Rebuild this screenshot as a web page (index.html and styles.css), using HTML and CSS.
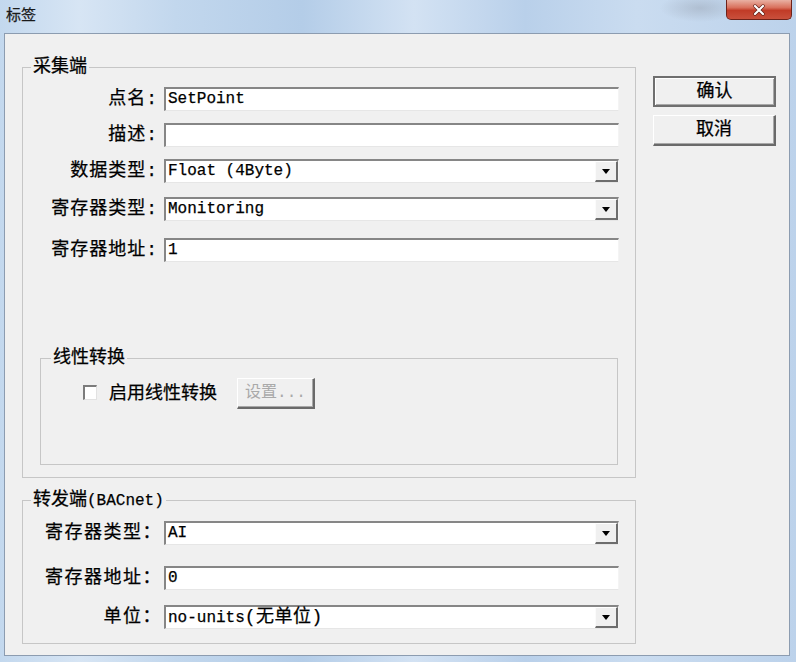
FILE: index.html
```html
<!DOCTYPE html>
<html lang="zh-CN">
<head>
<meta charset="utf-8">
<title>标签</title>
<link rel="stylesheet" href="styles.css">
</head>
<body>
<div class="window">
  <div class="titlebar">
    <span class="title">标签</span>
    <div class="close">
      <svg width="14" height="12" viewBox="0 0 14 12"><path d="M3 2 L11 10 M11 2 L3 10" stroke="#5a1a12" stroke-width="3.4" stroke-linecap="round"/><path d="M3 2 L11 10 M11 2 L3 10" stroke="#ffffff" stroke-width="2.2" stroke-linecap="round"/></svg>
    </div>
  </div>
  <div class="client">
    <div class="groups">
      <fieldset class="group group-src">
        <legend class="legend">采集端</legend>
        <div class="row">
          <span class="label">点名:</span>
          <div class="field"><span class="val">SetPoint</span></div>
        </div>
        <div class="row">
          <span class="label">描述:</span>
          <div class="field"><span class="val"></span></div>
        </div>
        <div class="row">
          <span class="label">数据类型:</span>
          <div class="field"><span class="val">Float (4Byte)</span><span class="drop"><i class="tri"></i></span></div>
        </div>
        <div class="row gap-14">
          <span class="label">寄存器类型:</span>
          <div class="field"><span class="val">Monitoring</span><span class="drop"><i class="tri"></i></span></div>
        </div>
        <div class="row gap-17">
          <span class="label">寄存器地址:</span>
          <div class="field"><span class="val">1</span></div>
        </div>
        <fieldset class="group group-linear">
          <legend class="legend legend-linear">线性转换</legend>
          <div class="linear-row">
            <span class="check"></span>
            <span class="check-label">启用线性转换</span>
            <button class="btn btn-disabled">设置...</button>
          </div>
        </fieldset>
      </fieldset>
      <fieldset class="group group-dst">
        <legend class="legend"><span>转发端</span><span class="latin">(BACnet)</span></legend>
        <div class="row">
          <span class="label label-wide">寄存器类型：</span>
          <div class="field"><span class="val">AI</span><span class="drop"><i class="tri"></i></span></div>
        </div>
        <div class="row gap-21">
          <span class="label label-wide">寄存器地址：</span>
          <div class="field"><span class="val">0</span></div>
        </div>
        <div class="row">
          <span class="label label-wide">单位：</span>
          <div class="field"><span class="val">no-units<span class="cjk">(无单位)</span></span><span class="drop"><i class="tri"></i></span></div>
        </div>
      </fieldset>
    </div>
    <div class="actions">
      <button class="btn btn-default">确认</button>
      <button class="btn">取消</button>
    </div>
  </div>
</div>
</body>
</html>
```
FILE: styles.css
```css
html, body {
  margin: 0;
  padding: 0;
}

body {
  width: 796px;
  height: 662px;
  overflow: hidden;
  font-family: "Liberation Mono", "Noto Sans CJK SC", monospace;
  color: #000;
}

.window {
  width: 796px;
  height: 662px;
  display: flex;
  flex-direction: column;
  box-sizing: border-box;
  -webkit-text-stroke: 0.25px currentColor;
  background:
    radial-gradient(ellipse 40px 14px at 700px 8px, rgba(150,160,175,0.45), rgba(150,160,175,0) 100%),
    linear-gradient(90deg, #c3d8ee 0%, #d7e5f4 10%, #c2d7ed 22%, #b4cde8 38%, #d3e2f3 52%, #b9d0ea 66%, #cadcf0 80%, #bcd2eb 100%);
}

.titlebar {
  height: 33px;
  flex: none;
  display: flex;
  justify-content: space-between;
  align-items: flex-start;
}

.title {
  margin: 5px 0 0 6px;
  font-family: "Noto Sans CJK SC", sans-serif;
  font-size: 15px;
  line-height: 18px;
  color: #1a1a1a;
}

.close {
  width: 66px;
  height: 20px;
  margin-right: 4px;
  box-sizing: border-box;
  border: 1px solid #6e2219;
  border-top: none;
  border-radius: 0 0 5px 5px;
  background: linear-gradient(#e9b1a3 0%, #d9705c 40%, #c13b27 55%, #c9503c 100%);
  display: flex;
  align-items: center;
  justify-content: center;
}

.client {
  flex: 1;
  margin: 0 6px 6px 4px;
  background: #f0f0f0;
  border: 1px solid #8c9cb0;
  display: flex;
  gap: 17px;
  padding: 24px 13px 0 17px;
}

.groups {
  width: 614px;
  display: flex;
  flex-direction: column;
}

.group {
  margin: 0;
  min-width: 0;
  border: 1px solid #c6c6c6;
  padding: 11px 15px 12px 17px;
}

.group-dst {
  margin-top: 13px;
  padding-bottom: 14px;
}

.legend {
  margin-left: -9px;
  padding: 0 2px;
  font-size: 18px;
  line-height: 18px;
}

.legend .latin {
  font-size: 16px;
}

.row {
  display: flex;
  align-items: center;
  height: 24px;
}

.row + .row {
  margin-top: 12px;
}

.group-dst .row + .row {
  margin-top: 15px;
}

.row.gap-14 {
  margin-top: 14px;
}

.row.gap-17 {
  margin-top: 17px;
}

.group-dst .row.gap-21 {
  margin-top: 21px;
}

.label {
  width: 122px;
  box-sizing: border-box;
  padding-right: 4px;
  text-align: right;
  font-size: 18px;
  line-height: 24px;
  letter-spacing: 1px;
  white-space: nowrap;
}

.label-wide {
  padding-right: 0;
  letter-spacing: 1.5px;
}

.field {
  width: 455px;
  height: 24px;
  margin-left: 2px;
  box-sizing: border-box;
  background: #fff;
  border-top: 2px solid #868686;
  border-left: 2px solid #868686;
  border-right: 1px solid #f4f4f4;
  border-bottom: 1px solid #e6e6e6;
  display: flex;
  align-items: stretch;
}

.val {
  flex: 1;
  padding-left: 2px;
  font-size: 16px;
  line-height: 21px;
  white-space: nowrap;
}

.val .cjk {
  font-size: 18px;
  letter-spacing: 0.5px;
}

.drop {
  width: 23px;
  box-sizing: border-box;
  background: #f0f0f0;
  border-style: solid;
  border-width: 1px 2px 2px 1px;
  border-color: #ffffff #6d6d6d #6d6d6d #fbfbfb;
  display: flex;
  align-items: center;
  justify-content: center;
}

.tri {
  width: 0;
  height: 0;
  border-left: 4px solid transparent;
  border-right: 4px solid transparent;
  border-top: 5px solid #000;
  margin-top: 1px;
}

.group-linear {
  margin: 87px 2px 0 0;
  padding: 11px 0 55px 42px;
}

.legend-linear {
  margin-left: -32px;
}

.linear-row {
  display: flex;
  align-items: center;
  height: 31px;
}

.check {
  width: 14px;
  height: 15px;
  box-sizing: border-box;
  background: #fff;
  border-top: 2px solid #7c7c7c;
  border-left: 2px solid #7c7c7c;
  border-right: 1px solid #e2e2e2;
  border-bottom: 1px solid #e2e2e2;
  margin-top: -3px;
}

.check-label {
  margin-left: 12px;
  font-size: 18px;
  line-height: 24px;
}

.btn {
  box-sizing: border-box;
  background: #f0f0f0;
  border-style: solid;
  border-width: 1px 2px 2px 1px;
  border-color: #ffffff #6a6a6a #6a6a6a #ffffff;
  box-shadow: inset -1px -1px #a8a8a8;
  font-family: "Liberation Mono", "Noto Sans CJK SC", monospace;
  font-size: 18px;
  line-height: 24px;
  color: #000;
  -webkit-text-stroke: 0.25px currentColor;
  padding: 0;
  width: 123px;
  height: 31px;
}

.btn-disabled {
  width: 78px;
  margin-left: 20px;
  font-size: 16px;
  color: #a9a9a9;
  -webkit-text-stroke: 0;
}

.btn-default {
  border-width: 2px;
  border-color: #6f6f6f;
  box-shadow: inset 1px 1px #ffffff, inset -1px -1px #a8a8a8;
}

.actions {
  width: 123px;
  padding-top: 18px;
  display: flex;
  flex-direction: column;
  gap: 8px;
}
```
